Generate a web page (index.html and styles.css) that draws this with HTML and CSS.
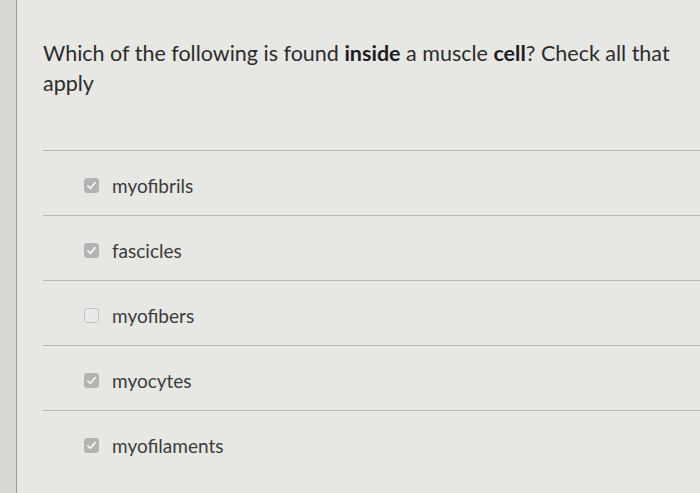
FILE: index.html
```html
<!DOCTYPE html>
<html>
<head>
<meta charset="utf-8">
<link rel="stylesheet" href="styles.css">
</head>
<body>
<div class="page">
  <div class="gutter"></div>
  <main class="panel">
    <p class="question">Which of the following is found <b>inside</b> a muscle <b>cell</b>? Check all that apply</p>
    <ul class="options">
      <li class="option"><span class="box checked"><svg viewBox="0 0 16 16"><path d="M3.5 8.5l3 3 6-7"/></svg></span><span class="label">myofibrils</span></li>
      <li class="option"><span class="box checked"><svg viewBox="0 0 16 16"><path d="M3.5 8.5l3 3 6-7"/></svg></span><span class="label">fascicles</span></li>
      <li class="option"><span class="box"></span><span class="label">myofibers</span></li>
      <li class="option"><span class="box checked"><svg viewBox="0 0 16 16"><path d="M3.5 8.5l3 3 6-7"/></svg></span><span class="label">myocytes</span></li>
      <li class="option"><span class="box checked"><svg viewBox="0 0 16 16"><path d="M3.5 8.5l3 3 6-7"/></svg></span><span class="label">myofilaments</span></li>
    </ul>
  </main>
</div>
</body>
</html>
```
FILE: styles.css
```css
html, body {
  margin: 0;
  padding: 0;
  height: 100%;
}
body {
  font-family: Lato, "Open Sans", sans-serif;
  background: #d9d9d6;
  color: #2e2e2e;
}
.page {
  display: flex;
  height: 493px;
  overflow: hidden;
}
.gutter {
  width: 16px;
  flex: none;
  background: #d8d8d5;
  border-right: 1px solid #9c9c9a;
}
.panel {
  flex: 1;
  background: #e7e7e4;
  padding: 38px 0 0 26px;
}
.question {
  margin: 0;
  font-size: 21.5px;
  line-height: 30px;
  padding-right: 10px;
  color: #2c2c2c;
}
.question b {
  font-weight: 700;
  color: #1e1e1e;
}
.options {
  list-style: none;
  margin: 52px 0 0 0;
  padding: 0;
}
.option {
  display: flex;
  align-items: center;
  gap: 13px;
  height: 65px;
  border-top: 1.5px solid #b9bab8;
  padding: 4px 0 0 41px;
  box-sizing: border-box;
}
.box {
  width: 15px;
  height: 15px;
  border: 1px solid #c3c3c1;
  border-radius: 3px;
  background: #e9e9e7;
  display: flex;
  align-items: center;
  justify-content: center;
  box-sizing: border-box;
}
.box.checked {
  background: #b3b3b1;
  border-color: #b3b3b1;
}
.box svg {
  width: 13px;
  height: 13px;
  fill: none;
  stroke: #f2f2f0;
  stroke-width: 2.2;
  stroke-linecap: round;
  stroke-linejoin: round;
}
.label {
  font-size: 19px;
  color: #3b3b3d;
}
```
